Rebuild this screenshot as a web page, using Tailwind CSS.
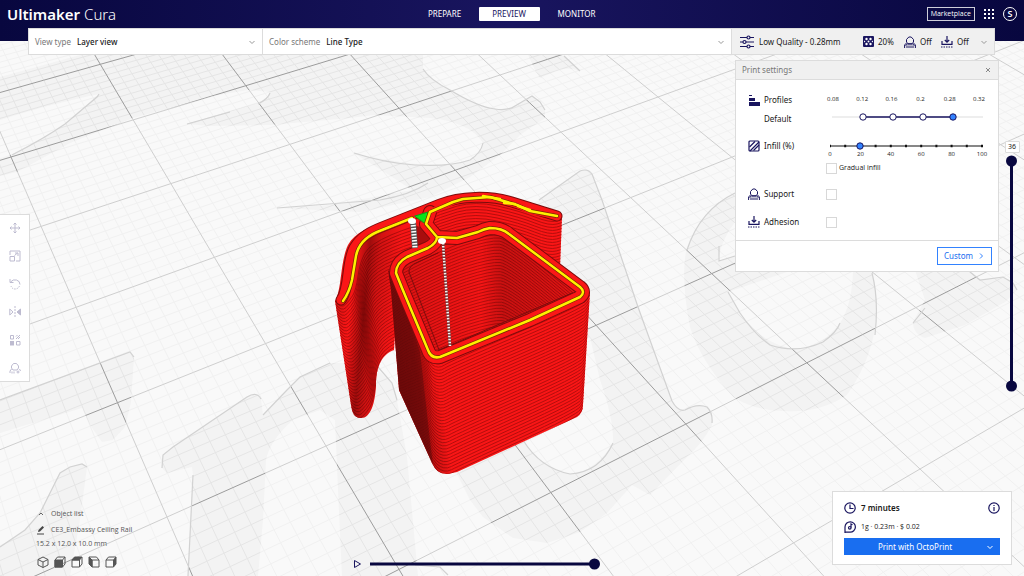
<!DOCTYPE html>
<html lang="en">
<head>
<meta charset="utf-8">
<meta name="viewport" content="width=device-width, initial-scale=1">
<title>Ultimaker Cura</title>
<script src="https://cdn.jsdelivr.net/npm/@tailwindcss/browser@4"></script>
</head>
<body class="relative flex min-h-screen flex-col overflow-hidden bg-[#f9f9f9] font-['Noto_Sans',sans-serif] text-[8px] leading-3 text-[#191919]">

<!-- Build plate and sliced model -->
<svg id="viewport" class="absolute top-0 left-0 h-[576px] w-[1024px]" viewBox="0 0 1024 576" fill="none" aria-label="Layer preview of the model">
  <defs>
    <clipPath id="shade">
      <path clip-rule="evenodd" d="M0 77 L80 55 H423 V68 Q430 80 450 90 Q478 106 495 109 Q510 111 520 103 L532 96 L545 110 V118 L520 135 L500 155 L470 177 L430 197 L360 212 L277 208 L330 205 L412 190 Q385 172 354 153 Q440 173 470 160 Q483 150 483 143 Q470 122 430 118 L374 115 L350 118 L270 125 L210 126 L187 124 Q240 108 258 103 Q270 96 270 92 L248 90 L213 96 L200 100 L133 118 L70 143 L17 172 L0 176 V158 L10 155 Q50 136 65 124 L99 94 Q50 104 0 120Z"/>
      <path d="M528 55H563L580 71Q568 66 556 71L540 78L535 70Z"/>
      <path clip-rule="evenodd" d="M500 220L539 200L580 171Q588 168 592 174L602 200L638 307L672 401Q678 412 685 410Q697 403 707 407Q714 414 712 425Q702 444 687 457L650 495L632 485L607 513L580 532L547 543L513 538L483 517L470 500L455 470L400 300ZM523 440Q540 468 570 474Q595 472 613 443Q614 420 600 380L590 337L500 400Z"/>
      <path clip-rule="evenodd" d="M760 187L735 193Q700 210 687 247Q680 275 690 327Q700 360 733 397Q755 411 785 411Q820 413 847 395Q875 355 877 310Q877 290 870 262ZM728 292L790 271H853Q852 305 840 323Q820 349 797 349Q765 347 740 313ZM735 222Q721 240 718 261L735 256Z"/>
      <path d="M915 270L925 300L913 322Q913 334 925 338L965 325L1005 302L1017 290L1013 281L1000 277L980 280L970 270Z"/>
      <path d="M0 400L130 352L134 357L131 402L125 427L113 440L102 442L90 425L82 408L0 433Z"/>
      <path d="M0 547L25 530L40 513L60 473L70 467L82 464L87 467L80 520L70 576H0Z"/>
      <path d="M162 468L163 455L173 447L247 397Q257 391 261 399L263 415L287 390L300 377L330 363H370L392 383L397 400L407 457L418 576H342L338 490L335 420L320 410L293 420Q270 440 266 460L263 520L258 576H188L193 475L192 467L167 473Z"/>
    </clipPath>
    <clipPath id="wingClip"><path d="M335 301C342 290 340 262 348 245C355 232 370 227 382 223L412 212L445 238L400 262L394 350C380 355 376 370 376 385C375 405 370 418 361 418C354 418 352 412 351 405Z"/></clipPath>
    <clipPath id="backClip"><path d="M400 216L440 200C460 192 490 191 515 198L552 212Q562 210 562 217L560 268L430 250Z"/></clipPath>
    <clipPath id="innerClip"><path d="M396 270L407 256L437 240L490 228L509 234L582 291L437 357L428 352Z"/></clipPath>
    <clipPath id="boxClip"><path d="M388 270L391 290L399 390L432 463Q437 475 448 474L457 472L577 417Q583 413 583 405L590 292L582 292L436 358L400 285Z"/></clipPath>
    <linearGradient id="wingShade" gradientUnits="userSpaceOnUse" x1="336" y1="320" x2="400" y2="326">
      <stop offset="0" stop-color="#300" stop-opacity=".15"/><stop offset=".2" stop-color="#300" stop-opacity="0"/><stop offset=".42" stop-color="#300" stop-opacity=".45"/><stop offset=".58" stop-color="#300" stop-opacity=".2"/><stop offset=".9" stop-color="#300" stop-opacity="0"/>
    </linearGradient>
    <linearGradient id="boxShade" gradientUnits="userSpaceOnUse" x1="408" y1="400" x2="440" y2="395">
      <stop offset="0" stop-color="#200" stop-opacity=".35"/><stop offset=".4" stop-color="#200" stop-opacity=".3"/><stop offset="1" stop-color="#200" stop-opacity="0"/>
    </linearGradient>
    <linearGradient id="innerShade" gradientUnits="userSpaceOnUse" x1="404" y1="0" x2="575" y2="0">
      <stop offset="0" stop-color="#200" stop-opacity=".12"/><stop offset=".45" stop-color="#200" stop-opacity="0"/><stop offset=".58" stop-color="#200" stop-opacity=".22"/><stop offset="1" stop-color="#200" stop-opacity=".1"/>
    </linearGradient>
  </defs>
  <path id="minor" stroke="#f1f1f1"/>
  <path id="major" stroke="#cfcfcf"/>
  <g clip-path="url(#shade)">
    <rect width="1024" height="576" fill="#f3f3f3"/>
    <path id="minorDark" stroke="#e5e5e5"/>
    <path id="majorDark" stroke="#9c9c9c"/>
  </g>
  <g stroke="#d2d2d2" stroke-width="1.2">
    <path d="M99 94L97 97L65 124Q45 138 12 155M270 93Q268 99 258 104M187 124L230 112M423 69Q430 80 450 90Q478 107 495 109Q508 111 515 106L532 96L540 102L545 110M564 56L580 71M354 153Q385 163 415 165Q450 167 470 160Q481 153 483 143M277 208L380 200Q410 195 428 183"/>
    <path d="M539 200L580 171Q588 168 592 174L602 200L638 307L672 401Q678 412 685 410Q697 403 707 407Q713 413 712 423M523 440Q540 468 570 474Q600 472 613 443M735 193Q700 210 687 250M872 273Q879 300 875 335M728 292L740 313Q755 335 770 345Q797 354 823 342Q837 332 840 323M719 246V261L735 256M913 323L925 308M970 272L980 280L1003 277L1013 283L1017 290"/>
    <path d="M0 400L130 352L134 357M0 547L25 530L40 513L60 473L70 467L82 464L87 467M162 468L163 455L173 447L247 397Q257 391 261 399M263 415L287 390L300 377L330 363M193 475L188 576M378 367L392 383L397 400M415 565L440 567L448 575"/>
  </g>
  <g id="model" stroke-linejoin="round" stroke-linecap="round">
    <g clip-path="url(#wingClip)"><rect x="320" y="180" width="140" height="250" fill="#f91616"/><path id="wingLayers" stroke="#b40e0e"/><rect x="320" y="180" width="140" height="250" fill="url(#wingShade)"/></g>
    <g clip-path="url(#backClip)"><rect x="395" y="180" width="180" height="100" fill="#f91616"/><path id="backLayers" stroke="#b40e0e"/></g>
    <path d="M412 224L422 228L430 238L420 246L412 246Z" fill="#a80d0d"/>
    <path d="M341 300C350 288 346 262 354 248C361 236 372 231 382 227L440 204C460 196 490 195 512 202L557 216" stroke="#7c0c0c" stroke-width="11"/>
    <path d="M341 300C350 288 346 262 354 248C361 236 372 231 382 227L440 204C460 196 490 195 512 202L557 216" stroke="#fb1717" stroke-width="9"/>
    <g clip-path="url(#boxClip)"><rect x="380" y="260" width="220" height="220" fill="#f91616"/><path id="boxLayers" stroke="#b40e0e"/><path d="M388 268L400 290L420 352L434 475L399 390Z" fill="#4a0d0d" opacity=".4"/><rect x="380" y="260" width="220" height="220" fill="url(#boxShade)"/></g>
    <g clip-path="url(#innerClip)"><rect x="390" y="220" width="200" height="140" fill="#f61515"/><path id="innerLayers" stroke="#b40e0e"/><rect x="390" y="220" width="200" height="140" fill="url(#innerShade)"/></g>
    <g id="rim">
      <path d="M437 237L426 224L430 212M437 237Q437 243 428 248L407 257Q396 263 396 273L402 288L428 350Q431 359 440 357L530 320L580 297Q586 292 580 287L509 234Q502 228 490 228Q484 229 478 232L457 238Z" stroke="#7c0c0c" stroke-width="14"/>
      <path d="M437 237L426 224L430 212M437 237Q437 243 428 248L407 257Q396 263 396 273L402 288L428 350Q431 359 440 357L530 320L580 297Q586 292 580 287L509 234Q502 228 490 228Q484 229 478 232L457 238Z" stroke="#fb1717" stroke-width="12"/>
      <path d="M430 212L453 202L463 199L490 197L517 205L530 211L557 216" stroke="#fb1717" stroke-width="6"/>
      <path d="M409 272Q408 266 418 262L438 253M409 272L439 350L572 293" stroke="#7c0c0c"/>
    </g>
    <path d="M415 216L428 212L426 224Z" fill="#08e51a" stroke="#08a514"/>
    <g stroke="#7a2c00" stroke-width="4"><path d="M437 237L426 224L430 212L453 202L463 199L490 197L517 205L530 211L557 216M437 237Q437 243 428 248L407 257Q396 263 396 273L402 288L428 350Q431 359 440 357L530 320L580 297Q586 292 580 287L509 234Q502 228 490 228Q484 229 478 232L457 238ZM412 218L377 232Q359 240 356 256L352 280Q349 293 343 301"/></g>
    <g stroke="#fff000" stroke-width="2.500"><path d="M437 237L426 224L430 212L453 202L463 199L490 197L517 205L530 211L557 216M437 237Q437 243 428 248L407 257Q396 263 396 273L402 288L428 350Q431 359 440 357L530 320L580 297Q586 292 580 287L509 234Q502 228 490 228Q484 229 478 232L457 238ZM412 218L377 232Q359 240 356 256L352 280Q349 293 343 301"/><path d="M483 196L500 199M504 203L515 204M518 206L530 210"/></g>
    <g stroke-linecap="butt"><path d="M413 222L415 248" stroke="#555" stroke-width="6"/><path d="M413 222L415 248" stroke="#fff" stroke-width="5" stroke-dasharray="1.500 1.500"/><path d="M443 243L450 346" stroke="#7a3030" stroke-width="3"/><path d="M443 243L450 346" stroke="#f4f4f4" stroke-width="2.500" stroke-dasharray="1.500 1.500"/></g>
    <ellipse cx="412" cy="221" rx="4" ry="3" fill="#fff"/><ellipse cx="442" cy="241" rx="4" ry="3" fill="#fff"/>
  </g>
</svg>

<header class="relative flex h-[41px] shrink-0 items-start justify-between bg-linear-to-r from-[#08073f] via-[#19155f] to-[#08073f] px-[7px] text-white">
  <h1 class="flex h-7 w-[380px] items-center gap-1 text-[15px] font-semibold">Ultimaker <span class="font-light">Cura</span></h1>
  <nav class="mt-[7px] flex h-[14px] gap-1" aria-label="Stages">
    <button class="w-[60px]">PREPARE</button>
    <button class="w-[61px] rounded-[1px] bg-white text-[#19155f]">PREVIEW</button>
    <button class="w-[66px]">MONITOR</button>
  </nav>
  <div class="flex h-7 w-[380px] items-center justify-end gap-2">
    <button class="h-[14px] border border-white/80 px-[3px] font-['Open_Sans',sans-serif] text-[7px] leading-3">Marketplace</button>
    <button aria-label="Applications"><svg class="size-3" viewBox="0 0 12 12" fill="#fff"><path d="M1 1h2v2H1zM5 1h2v2H5zM9 1h2v2H9zM1 5h2v2H1zM5 5h2v2H5zM9 5h2v2H9zM1 9h2v2H1zM5 9h2v2H5zM9 9h2v2H9z"/></svg></button>
    <button class="size-[14px] rounded-full border border-white text-[9px] leading-3 font-semibold">S</button>
  </div>
</header>

<section class="relative z-10 mr-[29px] ml-7 -mt-[13px] flex h-[27px] shrink-0 border border-[#dcdcdc] bg-white">
  <div class="relative flex w-[234px] items-center gap-1.5 border-r border-[#dcdcdc] pl-1.5">
    <label for="view" class="text-[#777]">View type</label>
    <select id="view" class="h-full flex-1 appearance-none bg-transparent font-medium outline-none"><option>Layer view</option></select>
    <svg class="pointer-events-none absolute right-1.5 size-2" viewBox="0 0 8 8" fill="none" stroke="#999"><path d="M1.500 3L4 5.500 6.500 3"/></svg>
  </div>
  <div class="relative flex flex-1 items-center gap-1.5 pl-1.5">
    <label for="scheme" class="text-[#777]">Color scheme</label>
    <select id="scheme" class="h-full flex-1 appearance-none bg-transparent font-medium outline-none"><option>Line Type</option></select>
    <svg class="pointer-events-none absolute right-1.5 size-2" viewBox="0 0 8 8" fill="none" stroke="#999"><path d="M1.500 3L4 5.500 6.500 3"/></svg>
  </div>
  <button class="flex w-[263px] items-center border-l border-[#dcdcdc] bg-[#f0f0f0] pr-1.5 pl-2 text-left">
    <svg class="size-[14px]" viewBox="0 0 14 14" fill="none" stroke="#19155f" stroke-width="1.200"><path d="M0 2.500h7M10 2.500h4M0 7h3M6 7h8M0 11.500h7M10 11.500h4"/><circle cx="8.500" cy="2.500" r="1.500"/><circle cx="4.500" cy="7" r="1.500"/><circle cx="8.500" cy="11.500" r="1.500"/></svg>
    <span class="ml-[5px] w-[104px]">Low Quality - 0.28mm</span>
    <svg class="size-[11px]" viewBox="0 0 11 11"><rect width="11" height="11" rx="1" fill="#19155f"/><g fill="#fff"><circle cx="3.500" cy="3" r="1.200"/><circle cx="7.500" cy="3" r="1.200"/><circle cx="3.500" cy="8" r="1.200"/><circle cx="7.500" cy="8" r="1.200"/><circle cx="5.500" cy="5.500" r="1"/><path d="M1 4.500l1.500 1L1 6.500zM10 4.500l-1.500 1 1.500 1z"/></g></svg>
    <span class="ml-1 w-[26px]">20%</span>
    <svg class="size-3" viewBox="0 0 12 12" fill="none" stroke="#19155f"><path d="M4 7.800L2.500 6V3.500L4.800 1h2.400L9.500 3.500V6L8 7.800zM.6 12V9L2.500 7M11.400 12V9L9.500 7"/><path d="M1.500 9.500L3.500 8h5l2 1.500M3 12V9.500M5 12V9.500M7 12V9.500M9 12V9.500"/></svg>
    <span class="ml-1 w-[21px]">Off</span>
    <svg class="size-3" viewBox="0 0 12 12" fill="none" stroke="#19155f" stroke-width="1.200"><path d="M6 0v6M3.800 4L6 6.200 8.200 4M1 5v3.400h10V5"/><path d="M0 11h12" stroke-dasharray="1.500 1"/></svg>
    <span class="ml-1">Off</span>
    <svg class="ml-auto size-2" viewBox="0 0 8 8" fill="none" stroke="#999"><path d="M1.500 3L4 5.500 6.500 3"/></svg>
  </button>
</section>

<main class="relative flex flex-1 flex-col justify-between">
  <div class="flex items-start">
    <div role="toolbar" aria-label="Tools" class="mt-[159px] flex w-[30px] flex-col items-center gap-4 border border-l-0 border-[#dcdcdc] bg-white py-[7px] text-[#bdbbd0]">
      <button aria-label="Move" class="size-3"><svg class="size-3" viewBox="0 0 12 12" fill="none" stroke="currentColor"><path d="M6 1v10M1 6h10M4.500 2.500L6 1l1.500 1.500M4.500 9.500L6 11l1.500-1.500M2.500 4.500L1 6l1.500 1.500M9.500 4.500L11 6 9.500 7.500"/></svg></button>
      <button aria-label="Scale" class="size-3"><svg class="size-3" viewBox="0 0 12 12" fill="none" stroke="currentColor"><path d="M1 5V1h10v10H7M1 6.500h4.500V11H1zM5.500 5.500L8.500 3M6 3h3v3"/></svg></button>
      <button aria-label="Rotate" class="size-3"><svg class="size-3" viewBox="0 0 12 12" fill="none" stroke="currentColor"><path d="M1 1v3.500h3.500M1.500 4Q4 1 7.500 2T11 6.500"/><path d="M10.500 8Q9 11 6 11T2 8" stroke-dasharray="1.500 1"/></svg></button>
      <button aria-label="Mirror" class="size-3"><svg class="size-3" viewBox="0 0 12 12" fill="none" stroke="currentColor"><path d="M.8 3v6L4 6z"/><path d="M11.500 3v6L8 6z" fill="currentColor"/><path d="M6 0v12" stroke-dasharray="2 1"/></svg></button>
      <button aria-label="Per model settings" class="size-3"><svg class="size-3" viewBox="0 0 12 12" fill="none" stroke="currentColor"><path d="M1.500 1.500h3v3.500h-3zM7.500 7.500h3.500v3.500H7.500z"/><path d="M1 7h4v4.500H1z" fill="currentColor" stroke="none"/><path d="M7 5l4-4M7 2.500L8.500 1M9 5l2-2"/></svg></button>
      <button aria-label="Support blocker" class="size-3"><svg class="size-3" viewBox="0 0 12 12" fill="none" stroke="currentColor"><path d="M4 8L2.500 6V4l2-2.500h3l2 2.500v2L8 8zM1 11V9l1.500-2M3 11.500V9.500M5 11.500V9.500"/><path d="M9 8.500v3M7.500 10h3M10.500 7l1 2"/></svg></button>
    </div>

    <section class="mt-[5px] ml-auto w-[264px] border border-[#dcdcdc] bg-white">
      <div class="flex h-[19px] items-center justify-between border-b border-[#dcdcdc] bg-[#f0f0f0] px-1.5 text-[#777]">
        <h2>Print settings</h2>
        <button aria-label="Close"><svg class="size-2" viewBox="0 0 8 8" fill="none" stroke="#888"><path d="M2 2l4 4M6 2L2 6"/></svg></button>
      </div>
      <div class="flex h-[160px] flex-col pt-[13px] pl-3">
        <div class="flex h-[46px]">
          <div class="w-[79px]">
            <div class="flex h-[14px] items-center gap-1"><svg class="size-3" viewBox="0 0 12 12" fill="#19155f"><path d="M1 1h3v1H1zM1 4h6v3H1zM1 8h11v4H1z"/></svg>Profiles</div>
            <label for="profile" class="ml-4 block pt-1.5">Default</label>
          </div>
          <div class="relative w-[164px]">
            <div class="-ml-[3px] flex w-[164px] justify-between font-['Open_Sans',sans-serif] text-[6px] [&>span]:w-[18px] [&>span]:text-center"><span>0.08</span><span>0.12</span><span>0.16</span><span>0.2</span><span>0.28</span><span>0.32</span></div>
            <svg class="mt-2 ml-1 h-2 w-[154px]" viewBox="0 0 154 8"><path d="M1 4h151" stroke="#ddd"/><path d="M32 4h89" stroke="#19155f" stroke-width="1.300"/><g fill="#fff" stroke="#19155f"><circle cx="32" cy="4" r="3.200"/><circle cx="62" cy="4" r="3.200"/><circle cx="92" cy="4" r="3.200"/><circle cx="122" cy="4" r="3.200" fill="#3282ff"/></g></svg>
            <input id="profile" type="range" min="0" max="5" value="4" aria-label="Profile layer height" class="absolute top-4 left-1 h-3 w-[156px] opacity-0">
          </div>
        </div>
        <div class="flex h-[41px]">
          <label for="infill" class="flex h-[14px] w-[79px] items-center gap-1"><svg class="size-3" viewBox="0 0 12 12" fill="none" stroke="#19155f" stroke-width="1.200"><rect x="1" y="1" width="10" height="10" rx="1"/><path d="M1.500 7l5.500-5.500M2 11l9-9M5.500 10.500L11 5"/></svg>Infill (%)</label>
          <div class="relative w-[164px]">
            <svg class="mt-[3px] h-2 w-[158px]" viewBox="0 0 158 8"><path d="M3 4h153" stroke="#111" stroke-width="1.200"/><path d="M3 4h153.500" stroke="#111" stroke-width="2.500" stroke-dasharray="2 13.200" stroke-dashoffset="1"/><circle cx="33" cy="4" r="3.200" fill="#3282ff" stroke="#19155f"/></svg>
            <input id="infill" type="range" value="20" class="absolute top-0 left-1 h-3 w-[156px] opacity-0">
            <div class="-ml-1.5 flex w-[170px] justify-between font-['Open_Sans',sans-serif] text-[6px] leading-2 [&>span]:w-[18px] [&>span]:text-center"><span>0</span><span>20</span><span>40</span><span>60</span><span>80</span><span>100</span></div>
            <label class="mt-1 flex items-center gap-0.5 font-['Open_Sans',sans-serif] text-[7px]"><input type="checkbox" class="-ml-px size-[11px] appearance-none border border-[#d8d8d8] bg-white">Gradual infill</label>
          </div>
        </div>
        <div class="flex h-7 items-center">
          <label for="support" class="flex w-[78px] items-center gap-1"><svg class="size-3" viewBox="0 0 12 12" fill="none" stroke="#19155f"><path d="M4 7.800L2.500 6V3.500L4.800 1h2.400L9.500 3.500V6L8 7.800zM.6 12V9L2.500 7M11.400 12V9L9.500 7"/><path d="M1.500 9.500L3.500 8h5l2 1.500M3 12V9.500M5 12V9.500M7 12V9.500M9 12V9.500"/></svg>Support</label>
          <input id="support" type="checkbox" class="size-[11px] appearance-none border border-[#d8d8d8] bg-white">
        </div>
        <div class="flex h-7 items-center">
          <label for="adhesion" class="flex w-[78px] items-center gap-1"><svg class="size-3" viewBox="0 0 12 12" fill="none" stroke="#19155f" stroke-width="1.200"><path d="M6 0v6M3.800 4L6 6.200 8.200 4M1 5v3.400h10V5"/><path d="M0 11h12" stroke-dasharray="1.500 1"/></svg>Adhesion</label>
          <input id="adhesion" type="checkbox" class="size-[11px] appearance-none border border-[#d8d8d8] bg-white">
        </div>
      </div>
      <div class="flex h-[31px] items-center justify-end border-t border-[#dcdcdc] pr-1.5">
        <button class="flex h-[18px] items-center gap-1 border border-[#3282ff] px-1.5 text-[#196ef0]">Custom <svg class="size-2" viewBox="0 0 8 8" fill="none" stroke="#3282ff"><path d="M3 1.500L5.500 4 3 6.500"/></svg></button>
      </div>
    </section>

    <div class="relative mt-[86px] mr-1 ml-[5px] flex w-4 flex-col items-center">
      <output class="h-3 w-[15px] rounded-[1px] border border-[#dcdcdc] bg-white text-center text-[7px] leading-[10px]">36</output>
      <svg class="mt-0.5 h-[238px] w-3" viewBox="0 0 12 238" fill="#08073f"><path d="M4 6h3v226H4z"/><circle cx="5.500" cy="6" r="5.500"/><circle cx="5.500" cy="231" r="5.500"/></svg>
      <input type="range" aria-label="Layer" min="1" max="36" value="36" class="absolute top-3 h-[238px] w-3 opacity-0 [writing-mode:vertical-lr]">
    </div>
  </div>

  <div class="flex items-end">
    <section class="w-[352px] pb-2 pl-[36px] font-['Open_Sans',sans-serif] text-[7px] leading-[14px] text-[#555]">
      <button class="flex items-center gap-1.5"><svg class="size-[9px]" viewBox="0 0 9 9" fill="none" stroke="#666"><path d="M3 5l2-2 2 2"/></svg>Object list</button>
      <div class="mt-0.5 flex items-center gap-1.5"><svg class="size-[9px]" viewBox="0 0 9 9"><path d="M2 6l.5-2L6.500 0 8 1.500 4 5.500z" fill="#444"/><path d="M1 8h7" stroke="#444"/></svg><span>CE3_Embassy Ceiling Rail</span></div>
      <p>15.2 x 12.0 x 10.0 mm</p>
      <div class="mt-[5px] flex gap-[5px] pl-px text-[#555]">
        <button aria-label="3D view"><svg class="size-3" viewBox="0 0 12 12" fill="none" stroke="currentColor" stroke-linejoin="round"><path d="M6 1l5 2.500v5.500l-5 2.500-5-2.500V3.500zM1 3.500L6 6l5-2.500M6 6v5.500"/></svg></button>
        <button aria-label="Front view"><svg class="size-3" viewBox="0 0 12 12" fill="none" stroke="currentColor" stroke-linejoin="round"><path d="M1 4l2.500-3H11v7l-2.500 3H1zM8.500 4L11 1"/><path d="M1 4h7.500v7H1z" fill="currentColor"/></svg></button>
        <button aria-label="Top view"><svg class="size-3" viewBox="0 0 12 12" fill="none" stroke="currentColor" stroke-linejoin="round"><path d="M1 4h7.500v7H1zM8.500 11L11 8V1"/><path d="M1 4l2.500-3H11L8.500 4z" fill="currentColor"/></svg></button>
        <button aria-label="Left view"><svg class="size-3" viewBox="0 0 12 12" fill="none" stroke="currentColor" stroke-linejoin="round"><path d="M4 4h7v7H4zM1 1h7.500L11 4"/><path d="M1 1l3 3v7L1 8z" fill="currentColor"/></svg></button>
        <button aria-label="Right view"><svg class="size-3" viewBox="0 0 12 12" fill="none" stroke="currentColor" stroke-linejoin="round"><path d="M1 4h7.500v7H1zM1 4l2.500-3H11"/><path d="M8.500 4L11 1v7l-2.500 3z" fill="currentColor"/></svg></button>
      </div>
    </section>

    <div class="relative mb-1.5 flex w-[250px] items-center gap-1.5">
      <button aria-label="Play"><svg class="size-3" viewBox="0 0 12 12" fill="none" stroke="#19155f"><path d="M2.500 2.500l6 3.500-6 3.500z"/></svg></button>
      <svg class="h-3 w-[232px]" viewBox="0 0 232 12" fill="#08073f"><path d="M0 4.500h224v3H0z"/><circle cx="224.500" cy="6" r="5.500"/></svg>
      <input type="range" aria-label="Print path position" value="100" class="absolute right-0 h-3 w-[232px] opacity-0">
    </div>

    <section class="mr-3 mb-[11px] ml-auto w-[180px] border border-[#dcdcdc] bg-white px-[11px] pt-2.5 pb-[9px]">
      <div class="flex h-3 items-center">
        <svg class="size-3" viewBox="0 0 12 12" fill="none" stroke="#19155f" stroke-width="1.200"><circle cx="6" cy="6" r="5.200"/><path d="M6 2.500V6.500h3.500"/></svg>
        <span class="ml-[5px] font-semibold">7 minutes</span>
        <button aria-label="Details" class="ml-auto"><svg class="size-3" viewBox="0 0 12 12" fill="none" stroke="#19155f" stroke-width="1.200"><circle cx="6" cy="6" r="5.200"/><path d="M6 5v4M6 3v1"/></svg></button>
      </div>
      <div class="mt-[7px] flex h-3 items-center">
        <svg class="size-3" viewBox="0 0 12 12" fill="none" stroke="#19155f" stroke-width="1.200"><path d="M1 12V6a5.200 5.200 0 1 1 5 5.200H1"/><path d="M7 6.500V3l1.500.8"/><circle cx="5.800" cy="6.800" r="1.300"/></svg>
        <span class="ml-[5px] font-['Open_Sans',sans-serif] text-[7px]">1g · 0.23m · $ 0.02</span>
      </div>
      <div class="mt-[5px] flex h-[17px] bg-[#196ef0] text-white">
        <button class="flex-1">Print with OctoPrint</button>
        <button aria-label="More outputs" class="w-[14px]"><svg class="size-2" viewBox="0 0 8 8" fill="none" stroke="#fff"><path d="M1.500 3L4 5.500 6.500 3"/></svg></button>
      </div>
    </section>
  </div>
</main>

<script>
// Plate grid: perspective mapping through four known grid corners [u, v, x, y].
const corners = [[0, 0, 11, 157], [0, 4, 167, 517], [4, 6, 920, 469], [4, 1, 500, 75]];
const rows = [];
for (const [u, v, x, y] of corners) {
  rows.push([u, v, 1, 0, 0, 0, -u * x, -v * x, x]);
  rows.push([0, 0, 0, u, v, 1, -u * y, -v * y, y]);
}
for (let i = 0; i < 8; i++) {
  let p = i;
  for (let r = i; r < 8; r++) if (Math.abs(rows[r][i]) > Math.abs(rows[p][i])) p = r;
  [rows[i], rows[p]] = [rows[p], rows[i]];
  for (let r = 0; r < 8; r++) {
    if (r === i) continue;
    const f = rows[r][i] / rows[i][i];
    for (let c = i; c < 9; c++) rows[r][c] -= f * rows[i][c];
  }
}
const h = rows.map((r, i) => r[8] / r[i]);
function project(u, v) {
  const w = h[6] * u + h[7] * v + 1;
  return w > 0.15 ? [(h[0] * u + h[1] * v + h[2]) / w, (h[3] * u + h[4] * v + h[5]) / w] : null;
}
function gridLine(fixed, alongU) {
  let d = '', pen = false;
  for (let t = -4; t <= 12; t += 0.5) {
    const p = alongU ? project(t, fixed) : project(fixed, t);
    if (!p) { pen = false; continue; }
    d += (pen ? 'L' : 'M') + p[0].toFixed(1) + ' ' + p[1].toFixed(1);
    pen = true;
  }
  return d;
}
let minor = '', major = '';
for (let i = -30; i <= 100; i++) {
  const d = gridLine(i / 10, true) + gridLine(i / 10, false);
  if (i % 10) minor += d; else major += d;
}
const put = (id, d) => document.getElementById(id).setAttribute('d', d);
put('minor', minor); put('minorDark', minor);
put('major', major); put('majorDark', major);

// Layer contours, blended from the top outline to the bottom one.
function layers(top, bottom, count) {
  let d = '';
  for (let k = 0; k <= count; k++) {
    const t = k / count;
    const p = top.map((a, i) => [a[0] + (bottom[i][0] - a[0]) * t, a[1] + (bottom[i][1] - a[1]) * t]);
    d += 'M' + p[0];
    for (let i = 1; i < p.length - 1; i++) d += 'Q' + p[i] + ' ' + (p[i][0] + p[i + 1][0]) / 2 + ' ' + (p[i][1] + p[i + 1][1]) / 2;
    d += 'L' + p[p.length - 1];
  }
  return d;
}
const shift = (pts, dx, dy) => pts.map(([x, y]) => [x + dx, y + dy]);
const wing = [[335, 301], [341, 309], [350, 300], [356, 290], [360, 262], [370, 244], [412, 226], [440, 222]];
const back = [[425, 215], [440, 208], [475, 198], [520, 208], [550, 220], [564, 216]];
const inner = [[392, 276], [440, 250], [490, 234], [508, 236], [590, 304]];
put('wingLayers', layers(wing, shift(wing, 17, 112), 36));
put('backLayers', layers(back, shift(back, -2, 78), 26));
put('innerLayers', layers(inner, shift(inner, 4, 110), 36));
put('boxLayers', layers(
  [[388, 270], [400, 290], [427, 358], [438, 366], [450, 358], [583, 302], [590, 292]],
  [[399, 390], [410, 416], [430, 466], [444, 480], [460, 472], [577, 418], [583, 408]], 36));
</script>
</body>
</html>
